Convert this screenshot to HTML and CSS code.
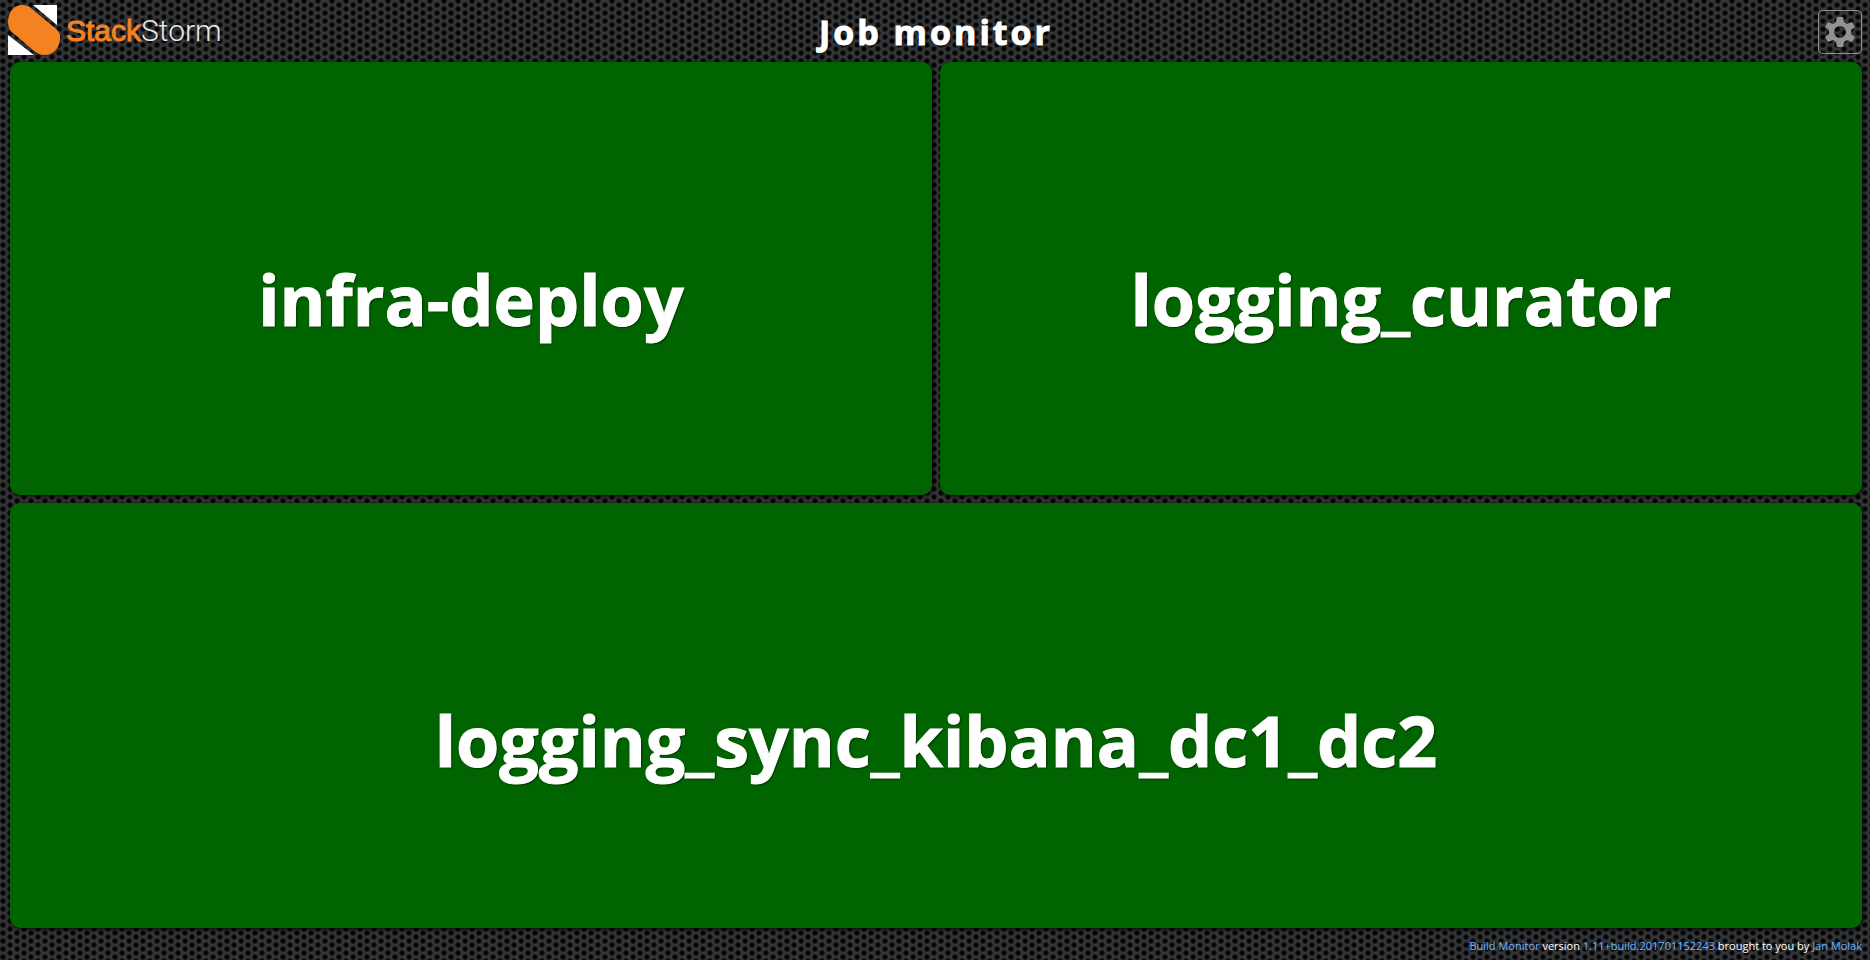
FILE: index.html
```html
<!DOCTYPE html>
<html lang="en">
<head>
<meta charset="utf-8">
<title>Job monitor</title>
<link rel="stylesheet" href="styles.css">
</head>
<body>
<header class="header">
  <a class="logo" href="#" aria-label="StackStorm">
    <svg class="logo-mark" viewBox="0 0 53 50" aria-hidden="true">
      <path fill="#fff" d="M25 0H49V20ZM0 30V50H26Z"/>
      <path fill="#f58220" d="M14 0C18 0 21 1 24 4L47 23C51 26 53 30 52 35C51 44 44 50 37 50C32 50 29 48 25 45L5 28C2 26 0 22 0 17C0 7 6 0 14 0Z"/>
    </svg>
    <span class="logo-text"><span class="logo-stack">Stack</span><span class="logo-storm">Storm</span></span>
  </a>
  <h1 class="title">Job monitor</h1>
  <button class="settings" type="button" aria-label="Settings">
    <svg class="gear" viewBox="0 0 32 32" aria-hidden="true">
      <path fill="currentColor" fill-rule="evenodd" d="M13 1H19L20 6L23 8L28 6L31 11L27 14V18L31 21L28 26L23 24L20 26L19 31H13L12 26L9 24L4 26L1 21L5 18V14L1 11L4 6L9 8L12 6ZM16 10A6 6 0 1 0 16 22A6 6 0 1 0 16 10Z"/>
    </svg>
  </button>
</header>
<main class="jobs">
  <article class="job"><h2 class="job-name">infra-deploy</h2></article>
  <article class="job"><h2 class="job-name">logging_curator</h2></article>
  <article class="job job-wide"><h2 class="job-name">logging_sync_kibana_dc1_dc2</h2></article>
</main>
<footer class="footer"><a href="#">Build Monitor</a> version <a href="#">1.11+build.201701152243</a> brought to you by <a href="#">Jan Molak</a></footer>
</body>
</html>
```

FILE: styles.css
```css
* { box-sizing: border-box; }

body {
  display: flex;
  flex-direction: column;
  min-height: 100vh;
  margin: 0;
  padding: 0 8px 0 10px;
  color: #fff;
  font-family: "Open Sans", "Noto Sans", sans-serif;
  background-color: #363739;
  background-image:
    radial-gradient(circle at 3px 5px, #000 1px, #0c0c0d 2px, #2a2b2d 3px, transparent 4px),
    radial-gradient(circle at 10px 1px, #000 1px, #0c0c0d 2px, #2a2b2d 3px, transparent 4px),
    radial-gradient(circle at 10px 9px, #000 1px, #0c0c0d 2px, #2a2b2d 3px, transparent 4px);
  background-size: 14px 8px;
}

.header {
  display: grid;
  grid-template-columns: 1fr auto 1fr;
  align-items: center;
  height: 62px;
  padding-top: 2px;
}

.logo {
  display: flex;
  align-items: center;
  align-self: start;
  gap: 5px;
  margin: 3px 0 0 -2px;
  color: #fff;
  text-decoration: none;
}

.logo-mark { width: 53px; height: 50px; }

.logo-text {
  padding-top: 2px;
  font: 30px/36px "Liberation Sans", Arial, sans-serif;
}

.logo-stack {
  color: #f58220;
  -webkit-text-stroke: 1px #f58220;
}

.logo-storm {
  color: #e8e8e8;
  font-family: Roboto, "Liberation Sans", sans-serif;
  font-weight: 300;
}

.title {
  margin: 0;
  font-size: 34px;
  line-height: 46px;
  font-weight: 700;
  letter-spacing: 3px;
  -webkit-text-stroke: 1px #fff;
  text-shadow: 1px 1px 2px #000;
}

.settings {
  display: flex;
  align-items: center;
  justify-content: center;
  justify-self: end;
  width: 44px;
  height: 44px;
  padding: 0;
  border: 1px solid #929292;
  border-radius: 5px;
  color: #929292;
  background: transparent;
}

.gear { width: 32px; height: 32px; }

.jobs {
  display: grid;
  flex: 1;
  grid-template-columns: 1fr 1fr;
  grid-template-rows: 433fr 425fr;
  gap: 8px;
}

.job {
  display: flex;
  align-items: flex-start;
  justify-content: center;
  padding-top: 20vh;
  border-radius: 10px;
  background: #006400;
  box-shadow: 1px 1px 4px #000;
}

.job-wide { grid-column: 1 / -1; }

.job-name {
  margin: 0;
  font-size: 70px;
  line-height: 90px;
  font-weight: 700;
  -webkit-text-stroke: 1px #fff;
  text-shadow: 1px 1px 2px rgba(0, 0, 0, 0.7);
}

.footer {
  padding: 10px 0 6px;
  font-size: 11px;
  line-height: 16px;
  text-align: right;
}

.footer a {
  color: #6bb5ff;
  text-decoration: none;
}
```
